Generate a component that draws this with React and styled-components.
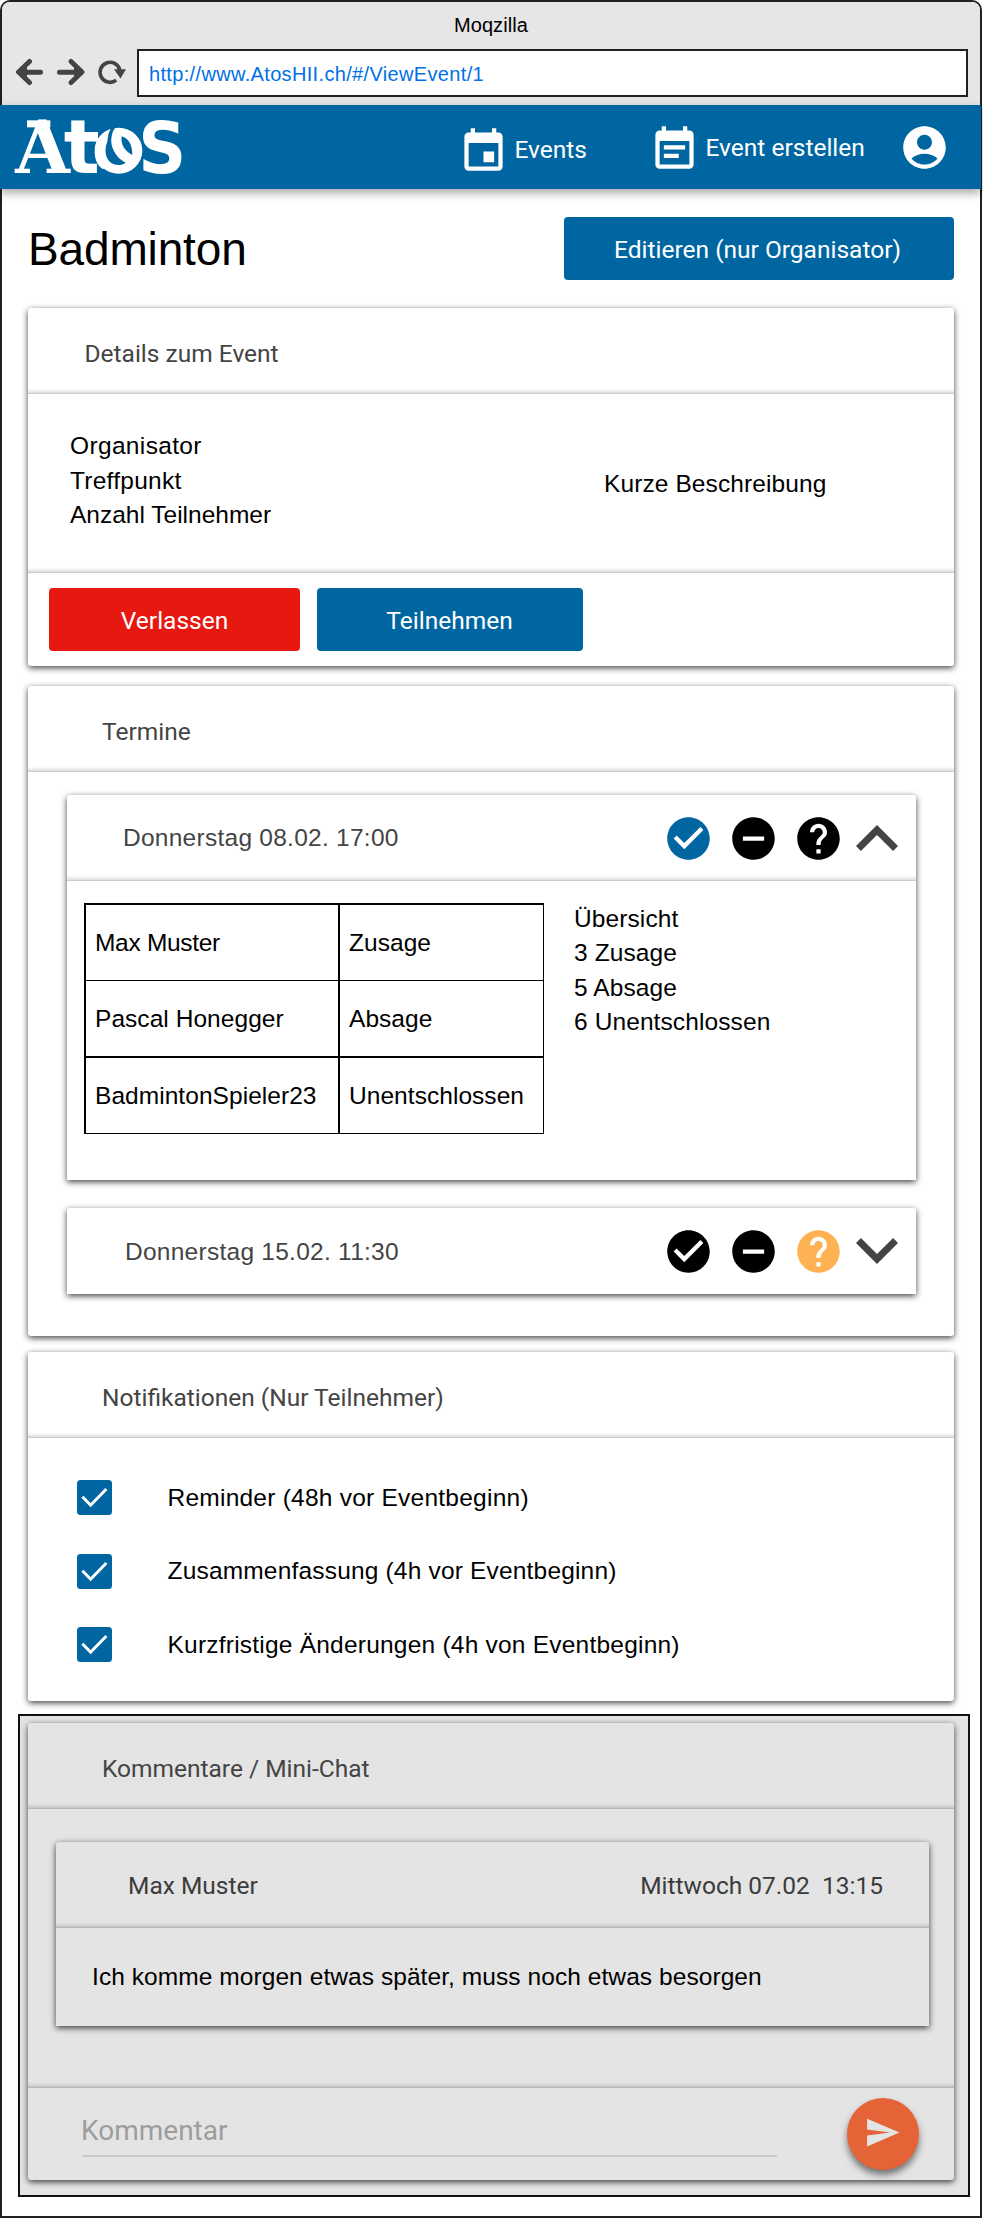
import React from "react";
import styled, { createGlobalStyle, css } from "styled-components";
import {
  MdEvent,
  MdEventNote,
  MdAccountCircle,
  MdCheckCircle,
  MdRemoveCircle,
  MdHelp,
  MdSend,
} from "react-icons/md";

const BLUE = "#0066a1";
const RED = "#e71810";
const GREY = "#e4e4e4";
const INK = "#444444";

const GlobalStyle = createGlobalStyle`
  * { box-sizing: border-box; }
  body { margin: 0; background: #fff; }
  svg { display: block; flex: none; }
`;

const roboto = css`
  font-family: Roboto, "Liberation Sans", sans-serif;
  font-size: 24.5px;
`;

const arial = css`
  font-family: "Liberation Sans", Arial, sans-serif;
  font-size: 24.5px;
`;

const Window = styled.div`
  width: 982px;
  height: 2218px;
  border: 2px solid #231f20;
  border-radius: 10px 10px 0 0;
  background: #fff;
  white-space: pre;
`;

/* Browser chrome */
const Chrome = styled.header`
  height: 103px;
  background: #e6e6e6;
  border-radius: 8px 8px 0 0;
  padding-top: 7px;
`;

const WindowTitle = styled.div`
  ${arial}
  font-size: 20px;
  line-height: 32px;
  letter-spacing: 0.1px;
  text-align: center;
  color: #000;
`;

const Toolbar = styled.div`
  display: flex;
  padding: 8px 12px 0 13px;
`;

const BrowserButtons = styled.svg`
  width: 122px;
  height: 48px;
`;

const AddressBar = styled.div`
  ${arial}
  flex: 1;
  height: 48px;
  border: 2px solid #231f20;
  background: #fff;
  color: #0071e6;
  font-size: 20px;
  line-height: 46px;
  letter-spacing: 0.34px;
  padding-left: 10px;
`;

/* Site navigation */
const Nav = styled.nav`
  position: relative;
  display: flex;
  align-items: center;
  width: 981px;
  height: 84px;
  margin-left: -2px;
  padding-left: 14px;
  background: ${BLUE};
  color: #fff;
  box-shadow: 0 4px 9px rgba(0, 0, 0, 0.35);
`;

const Logo = styled.svg`
  width: 169px;
  height: 56px;
  margin-right: 274.5px;
  overflow: visible;
`;

const NavItem = styled.a`
  ${roboto}
  display: flex;
  align-items: center;
  gap: ${(p) => p.$gap}px;
  width: ${(p) => p.$width}px;
  padding-top: ${(p) => p.$drop || 0}px;
  line-height: 34px;
`;

const NavIcon = styled.span`
  padding-top: ${(p) => p.$drop}px;
`;

const NavLabel = styled.span`
  padding-top: 1px;
`;

/* Page */
const Page = styled.main`
  padding: 28px 0 0 26px;
  width: 952px;
`;

const TitleRow = styled.div`
  display: flex;
  justify-content: space-between;
  align-items: center;
  margin-bottom: 28px;
`;

const Title = styled.h1`
  ${arial}
  margin: 0;
  font-size: 46px;
  font-weight: 400;
  letter-spacing: -0.15px;
`;

const Button = styled.button`
  ${roboto}
  width: ${(p) => p.$width}px;
  height: 63px;
  border: 0;
  border-radius: 4px;
  padding: 2px ${(p) => p.$trim || 0}px 0 0;
  background: ${(p) => (p.$danger ? RED : BLUE)};
  color: #fff;
  line-height: 34px;
`;

const cardShadow = css`
  box-shadow: 0 2px 6px rgba(0, 0, 0, 0.74);
`;

const Card = styled.section`
  ${cardShadow}
  height: ${(p) => p.$height}px;
  margin-bottom: ${(p) => p.$after || 0}px;
  border-radius: 3px;
  background: ${(p) => (p.$grey ? GREY : "#fff")};
`;

const divider = css`
  border-bottom: 1px solid rgba(0, 0, 0, 0.2);
  box-shadow: inset 0 -5px 4px -4px rgba(0, 0, 0, 0.2);
`;

const CardHeader = styled.h2`
  ${roboto}
  ${divider}
  height: 86px;
  margin: 0;
  padding: 6px 0 0 ${(p) => p.$indent || 74}px;
  font-weight: 400;
  line-height: 80px;
  color: ${INK};
`;

const Details = styled.div`
  ${arial}
  ${divider}
  display: flex;
  height: 179px;
  padding: 35px 0 0 42px;
  line-height: 34.5px;
`;

const DetailList = styled.div`
  width: 534px;
`;

const Line = styled.div`
  letter-spacing: ${(p) => p.$ls ?? 0.15}px;
`;

const Description = styled.div`
  padding-top: 37.5px;
  letter-spacing: 0.1px;
`;

const Actions = styled.div`
  display: flex;
  gap: 17px;
  padding: 15px 21px;
`;

/* Dates */
const Dates = styled.div`
  display: flex;
  flex-direction: column;
  gap: 28px;
  padding: 23px 38px 0 39px;
`;

const DateCard = styled.article`
  ${cardShadow}
  height: ${(p) => p.$height}px;
  border-radius: 3px 3px 0 0;
`;

const DateHeader = styled.div`
  ${arial}
  ${(p) => p.$open && divider}
  display: flex;
  align-items: center;
  height: 86px;
  padding: 1px 18px 0 ${(p) => p.$indent}px;
  line-height: 34px;
  letter-spacing: 0.26px;
  color: ${INK};
`;

const Answers = styled.div`
  display: flex;
  gap: 14px;
  margin: 0 12.5px 0 auto;
`;

const Answer = styled.span`
  color: ${(p) => p.$color || "#000"};
`;

const Chevron = styled.svg`
  width: 42px;
  height: 26px;
  margin-bottom: 1px;
  transform: ${(p) => (p.$down ? "rotate(180deg)" : "none")};
  fill: ${INK};
`;

const DateBody = styled.div`
  ${arial}
  display: flex;
  padding: 21px 0 0 17px;
`;

const Table = styled.div`
  display: grid;
  grid-template-columns: 254px 205px;
  grid-template-rows: 77px 76px 77px;
  height: 231px;
  margin: 1px 30px 0 0;
  border-right: 1px solid #000;
  border-bottom: 1px solid #000;
`;

const Cell = styled.div`
  display: flex;
  align-items: center;
  padding-left: 9px;
  border-left: 2px solid #000;
  border-top: ${(p) => (p.$thin ? 1 : 2)}px solid #000;
  letter-spacing: ${(p) => p.$ls ?? 0.05}px;
`;

const Overview = styled.div`
  line-height: 34.4px;
`;

/* Notifications */
const Options = styled.div`
  padding: 23px 0 0 49px;
`;

const Option = styled.label`
  ${arial}
  display: flex;
  align-items: center;
  gap: 55.5px;
  height: 73.5px;
  letter-spacing: ${(p) => p.$ls}px;
`;

const Box = styled.svg`
  width: 35px;
  height: 35px;
`;

/* Comments */
const Muted = styled.div`
  width: 952px;
  height: 483px;
  margin-left: -10px;
  padding: 7px 14px 0 8px;
  border: 2px solid #111;
  background: ${GREY};
`;

const Comments = styled.div`
  ${divider}
  height: 279px;
  padding: 33px 25px 0 28px;
`;

const Comment = styled.article`
  ${cardShadow}
  height: 184px;
  border-radius: 3px 3px 0 0;
`;

const CommentHeader = styled.div`
  ${roboto}
  ${divider}
  display: flex;
  justify-content: space-between;
  align-items: center;
  height: 86px;
  padding: 1px 46px 0 72px;
  color: #3c3c3c;
`;

const CommentText = styled.p`
  ${arial}
  margin: 0;
  padding-left: 36px;
  line-height: 97px;
  letter-spacing: 0.07px;
`;

const Composer = styled.div`
  display: flex;
  padding-left: 54px;
`;

const Field = styled.div`
  ${roboto}
  width: 695px;
  height: 69px;
  padding-top: 26px;
  border-bottom: 2px solid #cacaca;
  font-size: 28px;
  line-height: 34px;
  text-indent: -1px;
  color: #9d9d9d;
`;

const SendButton = styled.button`
  display: flex;
  align-items: center;
  justify-content: center;
  width: 72px;
  height: 72px;
  margin: 10px 0 0 70px;
  padding: 0 2px 3px 0;
  border: 0;
  border-radius: 50%;
  background: #e56437;
  color: ${GREY};
  box-shadow: 0 5px 7px rgba(0, 0, 0, 0.5);
`;

function AtosLogo() {
  return (
    <Logo viewBox="42 360 507 168" fill="#fff" aria-label="Atos">
      <text x="46" y="522" fontWeight="bold" fontSize="217" fontFamily="DejaVu Serif, serif" textLength="164" lengthAdjust="spacingAndGlyphs">A</text>
      <rect x="81" y="364" width="70" height="21" />
      <text x="191" y="522" fontWeight="bold" fontSize="222" fontFamily="DejaVu Sans, sans-serif" textLength="108" lengthAdjust="spacingAndGlyphs">t</text>
      <path d="M332 390C298 402 284 428 284 456C284 482 292 500 308 510L345 500L330 430Z" />
      <ellipse cx="356" cy="455" rx="71" ry="69" />
      <path fill={BLUE} d="M333 388C320 410 326 424 318 440C312 470 325 497 354 498C364 498 371 496 377 491C347 478 328 440 335 412Q337 398 346 385Z" />
      <path fill={BLUE} d="M365 412C385 418 397 436 397 468C376 458 361 438 365 412Z" />
      <text x="415" y="521" fontWeight="bold" fontSize="212" fontFamily="DejaVu Sans, sans-serif" textLength="144" lengthAdjust="spacingAndGlyphs">S</text>
    </Logo>
  );
}

function ChevronIcon({ down }) {
  return (
    <Chevron $down={down} viewBox="6 8 12 7.41">
      <path d="M12 8l-6 6 1.41 1.41L12 10.83l4.59 4.58L18 14z" />
    </Chevron>
  );
}

function DateHead({ label, indent, open, colors = {} }) {
  return (
    <DateHeader $open={open} $indent={indent}>
      {label}
      <Answers>
        <Answer $color={colors.yes}><MdCheckCircle size={51} /></Answer>
        <Answer><MdRemoveCircle size={51} /></Answer>
        <Answer $color={colors.maybe}><MdHelp size={51} /></Answer>
      </Answers>
      <ChevronIcon down={!open} />
    </DateHeader>
  );
}

function CheckOption({ label, ls }) {
  return (
    <Option $ls={ls}>
      <Box viewBox="0 0 35 35">
        <rect width="35" height="35" rx="3.5" fill={BLUE} />
        <path d="M5.4 16.8L13.6 25.2L29.4 9" fill="none" stroke="#fff" strokeWidth="3" />
      </Box>
      {label}
    </Option>
  );
}

export default function App() {
  return (
    <>
      <GlobalStyle />
      <Window>
        <Chrome>
          <WindowTitle>Moqzilla</WindowTitle>
          <Toolbar>
            <BrowserButtons viewBox="15 49 122 48" fill="none" stroke={INK} strokeWidth="5" strokeLinecap="round" strokeLinejoin="round">
              <path d="M40.5 72.3H21M29.5 61.5L18.5 72L29.5 82.5" />
              <path d="M16.5 72L27 64V80Z" fill={INK} stroke="none" />
              <path d="M59.5 72.3H79M71 61.5L82 72L71 82.5" />
              <path d="M84.5 72L74 64V80Z" fill={INK} stroke="none" />
              <path d="M116.2 80.2A10 10 0 1 1 119.8 70" strokeWidth="3.6" strokeLinecap="butt" />
              <path d="M114 69.3H126L120.5 78.5Z" fill={INK} stroke="none" />
            </BrowserButtons>
            <AddressBar>http://www.AtosHII.ch/#/ViewEvent/1</AddressBar>
          </Toolbar>
        </Chrome>
        <Nav>
          <AtosLogo />
          <NavItem $width={191} $gap={6} $drop={4}>
            <NavIcon $drop={4}><MdEvent size={51} /></NavIcon>
            <NavLabel>Events</NavLabel>
          </NavItem>
          <NavItem $width={250} $gap={6}>
            <NavIcon $drop={4}><MdEventNote size={51} /></NavIcon>
            <NavLabel>Event erstellen</NavLabel>
          </NavItem>
          <MdAccountCircle size={51} />
        </Nav>
        <Page>
          <TitleRow>
            <Title>Badminton</Title>
            <Button $width={390} $trim={3}>Editieren (nur Organisator)</Button>
          </TitleRow>

          <Card $height={358} $after={20}>
            <CardHeader $indent={56.5}>Details zum Event</CardHeader>
            <Details>
              <DetailList>
                <Line $ls={0.35}>Organisator</Line>
                <Line $ls={0.25}>Treffpunkt</Line>
                <Line $ls={0}>Anzahl Teilnehmer</Line>
              </DetailList>
              <Description>Kurze Beschreibung</Description>
            </Details>
            <Actions>
              <Button $width={251} $danger>Verlassen</Button>
              <Button $width={266} $trim={1}>Teilnehmen</Button>
            </Actions>
          </Card>

          <Card $height={650} $after={16}>
            <CardHeader>Termine</CardHeader>
            <Dates>
              <DateCard $height={385}>
                <DateHead label="Donnerstag 08.02. 17:00" indent={56} open colors={{ yes: BLUE }} />
                <DateBody>
                  <Table>
                    <Cell $ls={-0.3}>Max Muster</Cell>
                    <Cell>Zusage</Cell>
                    <Cell $thin>Pascal Honegger</Cell>
                    <Cell $thin>Absage</Cell>
                    <Cell>BadmintonSpieler23</Cell>
                    <Cell>Unentschlossen</Cell>
                  </Table>
                  <Overview>
                    <Line $ls={0.1}>Übersicht</Line>
                    <Line $ls={0.1}>3 Zusage</Line>
                    <Line $ls={0.1}>5 Absage</Line>
                    <Line $ls={0.1}>6 Unentschlossen</Line>
                  </Overview>
                </DateBody>
              </DateCard>
              <DateCard $height={86}>
                <DateHead label="Donnerstag 15.02. 11:30" indent={58} colors={{ maybe: "#ffb253" }} />
              </DateCard>
            </Dates>
          </Card>

          <Card $height={349} $after={13}>
            <CardHeader>Notifikationen (Nur Teilnehmer)</CardHeader>
            <Options>
              <CheckOption label="Reminder (48h vor Eventbeginn)" ls={0.24} />
              <CheckOption label="Zusammenfassung (4h vor Eventbeginn)" ls={0.18} />
              <CheckOption label="Kurzfristige Änderungen (4h von Eventbeginn)" ls={0.22} />
            </Options>
          </Card>

          <Muted>
            <Card $height={457} $grey>
              <CardHeader>Kommentare / Mini-Chat</CardHeader>
              <Comments>
                <Comment>
                  <CommentHeader>
                    <span>Max Muster</span>
                    <span>Mittwoch 07.02  13:15</span>
                  </CommentHeader>
                  <CommentText>Ich komme morgen etwas später, muss noch etwas besorgen</CommentText>
                </Comment>
              </Comments>
              <Composer>
                <Field>Kommentar</Field>
                <SendButton><MdSend size={37} /></SendButton>
              </Composer>
            </Card>
          </Muted>
        </Page>
      </Window>
    </>
  );
}
